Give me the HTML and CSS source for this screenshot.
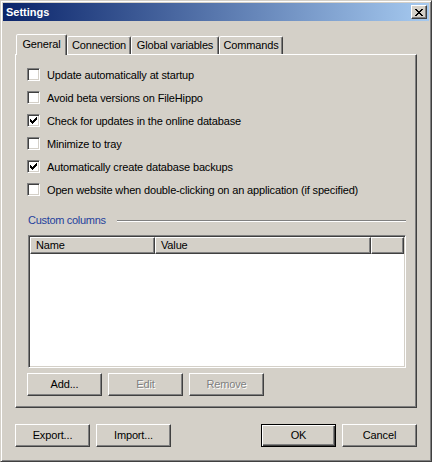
FILE: index.html
```html
<!DOCTYPE html>
<html>
<head>
<meta charset="utf-8">
<title>Settings</title>
<link rel="stylesheet" href="styles.css">
</head>
<body>
<div class="window">
  <div class="titlebar">
    <span class="title">Settings</span>
    <span class="close-btn">
      <svg width="8" height="7" viewBox="0 0 8 7" shape-rendering="crispEdges"><path d="M0 0h2v1H0z M6 0h2v1H6z M1 1h2v1H1z M5 1h2v1H5z M2 2h4v1H2z M3 3h2v1H3z M2 4h4v1H2z M1 5h2v1H1z M5 5h2v1H5z M0 6h2v1H0z M6 6h2v1H6z" fill="#000"/></svg>
    </span>
  </div>
  <div class="content">
    <div class="tabs">
      <div class="tab selected">General</div>
      <div class="tab t-conn">Connection</div>
      <div class="tab t-glob">Global variables</div>
      <div class="tab t-cmd">Commands</div>
    </div>
    <div class="panel">
      <div class="options">
        <div class="opt"><span class="cb"></span><span class="lbl">Update automatically at startup</span></div>
        <div class="opt"><span class="cb"></span><span class="lbl">Avoid beta versions on FileHippo</span></div>
        <div class="opt"><span class="cb checked"><svg width="7" height="7" viewBox="0 0 7 7" shape-rendering="crispEdges"><path d="M0 2h1v3H0z M1 3h1v3H1z M2 4h1v3H2z M3 3h1v3H3z M4 2h1v3H4z M5 1h1v3H5z M6 0h1v3H6z" fill="#000"/></svg></span><span class="lbl">Check for updates in the online database</span></div>
        <div class="opt"><span class="cb"></span><span class="lbl">Minimize to tray</span></div>
        <div class="opt"><span class="cb checked"><svg width="7" height="7" viewBox="0 0 7 7" shape-rendering="crispEdges"><path d="M0 2h1v3H0z M1 3h1v3H1z M2 4h1v3H2z M3 3h1v3H3z M4 2h1v3H4z M5 1h1v3H5z M6 0h1v3H6z" fill="#000"/></svg></span><span class="lbl">Automatically create database backups</span></div>
        <div class="opt"><span class="cb"></span><span class="lbl">Open website when double-clicking on an application (if specified)</span></div>
      </div>
      <div class="group-head"><span class="group-title">Custom columns</span><span class="etch"></span></div>
      <div class="list">
        <div class="list-header">
          <div class="hcell h-name">Name</div>
          <div class="hcell h-value">Value</div>
          <div class="hcell h-fill"></div>
        </div>
        <div class="list-body"></div>
      </div>
      <div class="btn-row">
        <div class="btn">Add...</div>
        <div class="btn disabled">Edit</div>
        <div class="btn disabled">Remove</div>
      </div>
    </div>
    <div class="dialog-buttons">
      <div class="group">
        <div class="btn">Export...</div>
        <div class="btn">Import...</div>
      </div>
      <div class="group">
        <div class="btn default">OK</div>
        <div class="btn">Cancel</div>
      </div>
    </div>
  </div>
</div>
</body>
</html>
```

FILE: styles.css
```css
html, body {
  margin: 0;
  padding: 0;
  background: #d4d0c8;
}

.window {
  box-sizing: border-box;
  width: 432px;
  height: 462px;
  background: #d4d0c8;
  border: 1px solid;
  border-color: #d4d0c8 #404040 #404040 #d4d0c8;
  box-shadow: inset 1px 1px 0 #ffffff, inset -1px -1px 0 #808080;
  padding: 2px;
  font-family: "Liberation Sans", Arial, sans-serif;
  font-size: 11px;
  letter-spacing: -0.15px;
  color: #000;
}

.titlebar {
  height: 18px;
  display: flex;
  align-items: center;
  justify-content: space-between;
  background: linear-gradient(to right, #0a246a, #a6caf0);
  padding-left: 3px;
  padding-right: 2px;
}

.title {
  color: #fff;
  font-weight: bold;
  font-size: 11px;
  letter-spacing: 0;
  line-height: 18px;
}

.close-btn {
  box-sizing: border-box;
  width: 16px;
  height: 14px;
  background: #d4d0c8;
  border: 1px solid;
  border-color: #ffffff #404040 #404040 #ffffff;
  box-shadow: inset -1px -1px 0 #808080;
  display: flex;
  align-items: center;
  justify-content: center;
  padding-right: 1px;
}

.close-btn svg {
  display: block;
}

.content {
  padding: 0 12px;
}

.tabs {
  margin-top: 13px;
  height: 20px;
  display: flex;
  align-items: flex-end;
  padding-left: 1px;
}

.tab {
  box-sizing: border-box;
  height: 18px;
  border: 1px solid;
  border-bottom: none;
  border-color: #ffffff #404040 transparent #ffffff;
  border-top-left-radius: 2px;
  border-top-right-radius: 2px;
  box-shadow: inset -1px 0 0 #808080;
  background: #d4d0c8;
  display: flex;
  align-items: center;
  justify-content: center;
  padding-bottom: 1px;
  white-space: nowrap;
}

.tab.selected {
  width: 51px;
  height: 21px;
  margin-bottom: -1px;
  position: relative;
  z-index: 1;
  padding-bottom: 3px;
}

.t-conn { width: 64px; }
.t-glob { width: 88px; }
.t-cmd { width: 64px; }

.panel {
  box-sizing: border-box;
  width: 402px;
  height: 354px;
  border: 1px solid;
  border-color: #ffffff #404040 #404040 #ffffff;
  box-shadow: inset -1px -1px 0 #808080;
  padding: 13px 10px 11px 11px;
}

.options {
  display: flex;
  flex-direction: column;
  gap: 10px;
}

.opt {
  display: flex;
  align-items: center;
  height: 13px;
  gap: 7px;
  white-space: nowrap;
}

.cb {
  box-sizing: border-box;
  width: 13px;
  height: 13px;
  flex: none;
  background: #ffffff;
  border: 1px solid;
  border-color: #808080 #ffffff #ffffff #808080;
  box-shadow: inset 1px 1px 0 #404040, inset -1px -1px 0 #d4d0c8;
  display: flex;
  align-items: center;
  justify-content: center;
}

.cb svg {
  display: block;
}

.lbl {
  line-height: 13px;
  padding-top: 1px;
}

.group-head {
  margin-top: 18px;
  margin-left: 1px;
  height: 13px;
  display: flex;
  align-items: center;
  gap: 11px;
}

.group-title {
  color: #1f3f9c;
  white-space: nowrap;
  line-height: 13px;
  letter-spacing: -0.3px;
}

.etch {
  flex: 1;
  border-top: 1px solid #808080;
  border-bottom: 1px solid #ffffff;
  height: 0;
}

.list {
  box-sizing: border-box;
  margin-top: 8px;
  margin-left: 1px;
  width: 378px;
  height: 133px;
  background: #ffffff;
  border: 1px solid;
  border-color: #808080 #ffffff #ffffff #808080;
  box-shadow: inset 1px 1px 0 #404040, inset -1px -1px 0 #d4d0c8;
  padding: 1px;
  display: flex;
  flex-direction: column;
}

.list-header {
  display: flex;
  height: 17px;
  flex: none;
}

.hcell {
  box-sizing: border-box;
  height: 17px;
  background: #d4d0c8;
  border: 1px solid;
  border-color: #ffffff #404040 #404040 #ffffff;
  box-shadow: inset -1px -1px 0 #808080;
  padding-left: 5px;
  line-height: 14px;
  white-space: nowrap;
}

.h-name { width: 125px; }
.h-value { width: 216px; }
.h-fill { flex: 1; }

.list-body {
  flex: 1;
}

.btn-row {
  margin-top: 5px;
  display: flex;
  gap: 6px;
}

.btn {
  box-sizing: border-box;
  width: 75px;
  height: 23px;
  background: #d4d0c8;
  border: 1px solid;
  border-color: #ffffff #404040 #404040 #ffffff;
  box-shadow: inset -1px -1px 0 #808080;
  display: flex;
  align-items: center;
  justify-content: center;
  padding-bottom: 1px;
  white-space: nowrap;
}

.btn.disabled {
  color: #808080;
  text-shadow: 1px 1px 0 #ffffff;
}

.btn.default {
  border-color: #000000;
  box-shadow: inset 1px 1px 0 #ffffff, inset -1px -1px 0 #404040, inset -2px -2px 0 #808080;
}

.dialog-buttons {
  margin-top: 16px;
  display: flex;
  justify-content: space-between;
}

.group {
  display: flex;
  gap: 6px;
}
```
